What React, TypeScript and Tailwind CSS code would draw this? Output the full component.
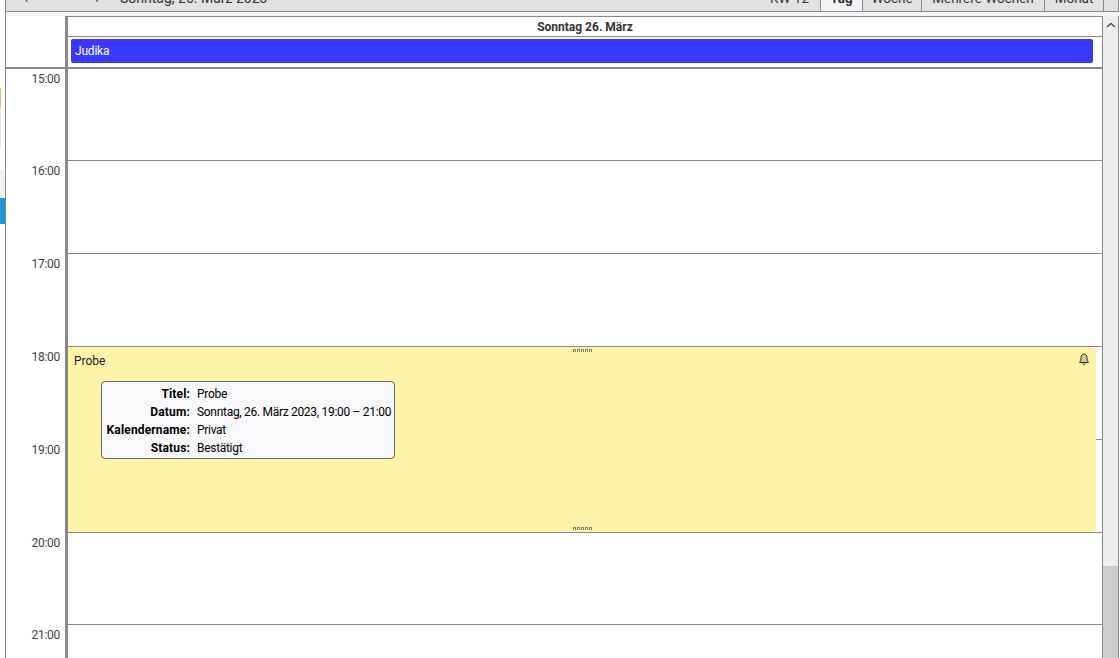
const font = "font-['Roboto','Liberation_Sans',sans-serif]"

const tabs = [
    { label: "KW 12", width: "w-[62px]" },
    { label: "Tag", width: "w-[42px]", active: true },
    { label: "Woche", width: "w-[59px]" },
    { label: "Mehrere Wochen", width: "w-[123px]" },
    { label: "Monat", width: "w-[59px]" },
]

const hours = [
    { time: "15:00", height: "h-[92px]" },
    { time: "16:00", height: "h-[93px]" },
    { time: "17:00", height: "h-[93px]" },
    { time: "18:00", height: "h-[93px]" },
    { time: "19:00", height: "h-[93px]" },
    { time: "20:00", height: "h-[92px]" },
    { time: "21:00", height: "h-[60px]" },
]

const details = [
    ["Titel:", "Probe"],
    ["Datum:", "Sonntag, 26. März 2023, 19:00 – 21:00"],
    ["Kalendername:", "Privat"],
    ["Status:", "Bestätigt"],
]

function Grip({ className }: { className: string }) {
    return (
        <svg className={className} width="19" height="3" viewBox="0 0 19 3">
            {[0, 4, 8, 12, 16].map((x) => (
                <path key={x} d={`M${x + 0.5} 3V0.5H${x + 2.5}V3`} fill="none" stroke="#77776a" strokeWidth="1" />
            ))}
        </svg>
    )
}

function Toolbar() {
    return (
        <div className="flex h-[12px] items-end justify-between overflow-hidden border-b border-[#888] bg-[#e1e2e4]">
            <div className="flex h-[26px] items-center text-[#333]">
                <span className="ml-[18px] w-[71px] text-[14px]">‹</span>
                <span className="w-[25px] text-[14px]">›</span>
                <span className="text-[14px]">Sonntag, 26. März 2023</span>
            </div>
            <div className="flex items-end">
                {tabs.map((tab) => (
                    <div
                        key={tab.label}
                        className={`flex h-[26px] ${tab.width} items-center justify-center border-r border-[#888] text-[13.5px] whitespace-nowrap text-[#333] ${tab.active ? "bg-[#f3f4f6] font-bold" : ""}`}
                    >
                        {tab.label}
                    </div>
                ))}
                <div className="h-[26px] w-[15px] border-r border-[#888]" />
            </div>
        </div>
    )
}

function DayHeader() {
    return (
        <div className="flex">
            <div className="w-[62px] border-r-3 border-[#888] bg-white" />
            <div className="flex-1 bg-white">
                <div className="flex h-[21px] items-center justify-center border-y border-[#888] text-xs font-bold text-[#333]">
                    Sonntag 26. März
                </div>
                <div className="h-[30px] pt-[2px] pr-[9px] pl-[3px]">
                    <div className="flex h-[24px] items-center rounded-[2px] bg-[#3838ff] px-[4px] text-xs tracking-[-0.2px] text-white">
                        Judika
                    </div>
                </div>
            </div>
        </div>
    )
}

function EventBlock() {
    return (
        <div className="absolute top-[278px] left-[62px] h-[185px] w-[1028px] rounded-r-[4px] bg-[#fdf4aa] text-xs text-[#222]">
            <Grip className="absolute top-[2px] left-[505px]" />
            <Grip className="absolute bottom-[2px] left-[505px]" />
            <div className="absolute top-[6px] left-[6px]">Probe</div>
            <svg className="absolute top-[6px] right-[6px]" width="12" height="13" viewBox="0 0 12 13">
                <path
                    d="M6 1C4 1 3 2.5 3 4.5C3 7 2.5 8 1.5 9.5H10.5C9.5 8 9 7 9 4.5C9 2.5 8 1 6 1Z"
                    fill="#cfc98c"
                    stroke="#333"
                    strokeWidth="1"
                    strokeLinejoin="round"
                />
                <path d="M4.8 10.5C5 11.8 7 11.8 7.2 10.5" fill="none" stroke="#333" strokeWidth="1" />
            </svg>
            <div className="absolute top-[34px] left-[33px] grid h-[78px] w-[294px] grid-cols-[84px_1fr] gap-x-[7px] rounded-[4px] border border-[#666] bg-[#f8f8fb] px-[4px] py-[3px] text-black">
                {details.map(([label, value]) => (
                    <div key={label} className="contents">
                        <div className="h-[18px] text-right leading-[18px] font-bold tracking-[0.15px] whitespace-nowrap">{label}</div>
                        <div className="h-[18px] leading-[18px] tracking-[-0.3px] whitespace-nowrap">{value}</div>
                    </div>
                ))}
            </div>
        </div>
    )
}

function DayGrid() {
    return (
        <div className="relative flex-1 overflow-hidden border-t-2 border-[#888] bg-white">
            {hours.map((hour) => (
                <div key={hour.time} className={`flex ${hour.height}`}>
                    <div className="w-[62px] border-r-3 border-[#888] pt-[2px] pr-[5px] text-right text-xs tracking-[-0.3px] text-[#444]">
                        {hour.time}
                    </div>
                    <div className="flex-1 border-b border-[#888]" />
                </div>
            ))}
            <EventBlock />
        </div>
    )
}

function Scrollbar() {
    return (
        <div className="flex w-[16px] flex-col border-r border-[#888] bg-[#eeeeee]">
            <div className="flex h-[550px] justify-center pt-[6px]">
                <svg width="10" height="6" viewBox="0 0 10 6">
                    <path d="M1 5L5 1.5L9 5" fill="none" stroke="#555" strokeWidth="1.6" />
                </svg>
            </div>
            <div className="flex-1 bg-[#cccccc]" />
        </div>
    )
}

function Sidebar() {
    return (
        <div className="flex w-[6px] flex-col border-r border-[#888] bg-white">
            <div className="h-[88px]" />
            <div className="h-[20px] w-[1px] bg-[#e0c070]" />
            <div className="h-[40px] w-[1px] bg-[#e8e8e8]" />
            <div className="h-[22px]" />
            <div className="h-[28px] bg-[#f4f4f4]" />
            <div className="h-[26px] bg-[#2196d8]" />
        </div>
    )
}

export default function App() {
    return (
        <div className={`flex h-[658px] w-[1120px] overflow-hidden bg-white ${font}`}>
            <Sidebar />
            <div className="flex w-[1113px] flex-col">
                <Toolbar />
                <div className="h-[4px] bg-[#f3f4f6]" />
                <div className="flex flex-1 overflow-hidden">
                    <div className="flex w-[1097px] flex-col border-r border-[#888]">
                        <DayHeader />
                        <DayGrid />
                    </div>
                    <Scrollbar />
                </div>
            </div>
        </div>
    )
}
